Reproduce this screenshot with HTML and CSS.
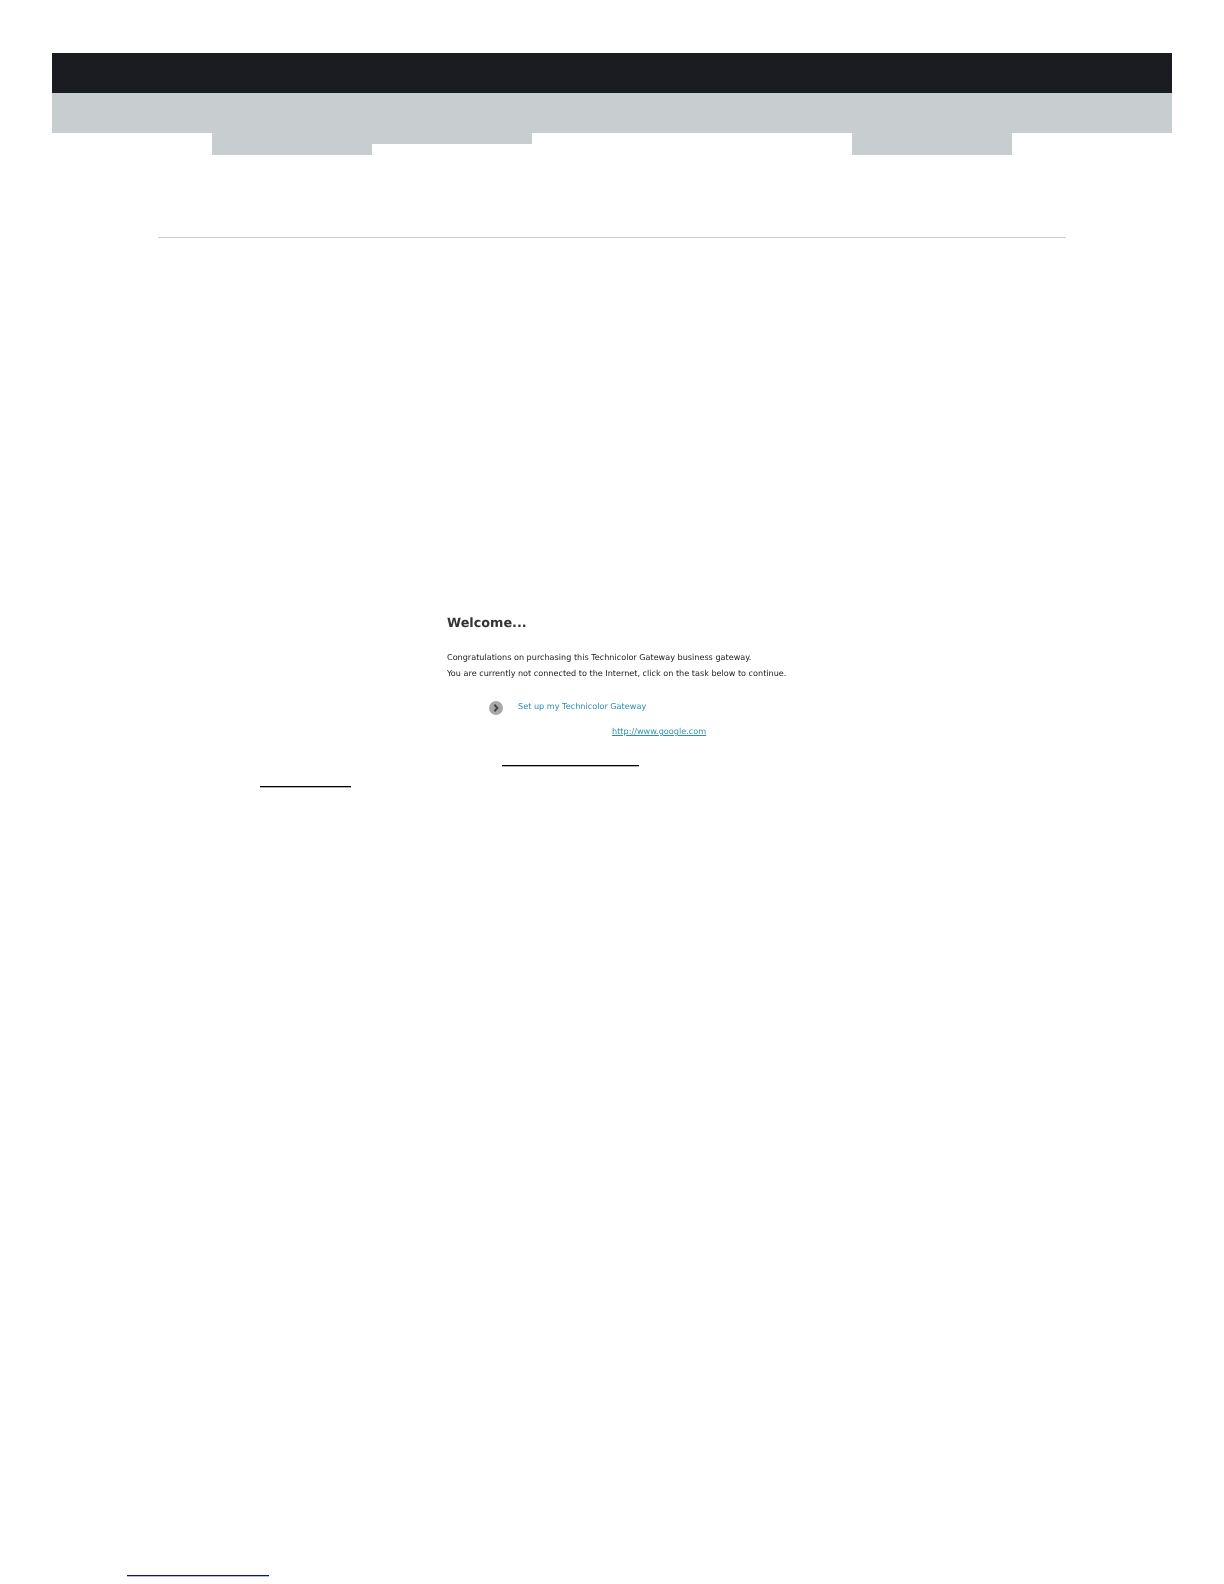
FILE: index.html
```html
<!DOCTYPE html>
<html lang="en">
<head>
<meta charset="utf-8">
<title>Welcome</title>
<link rel="stylesheet" href="styles.css">
</head>
<body>
<header class="bands">
  <div class="band-dark"></div>
  <div class="band-gray"></div>
  <div class="tabs">
    <div class="tab tab-tall"></div>
    <div class="tab tab-short"></div>
    <div class="tab"></div>
    <div class="tab"></div>
    <div class="tab tab-tall"></div>
  </div>
</header>
<hr class="rule">
<section class="shot">
  <h1 class="shot-title">Welcome...</h1>
  <p class="shot-line shot-line-first">Congratulations on purchasing this Technicolor Gateway business gateway.</p>
  <p class="shot-line">You are currently not connected to the Internet, click on the task below to continue.</p>
  <div class="task">
    <svg class="task-icon" viewBox="0 0 14 14" aria-hidden="true">
      <circle cx="7" cy="7" r="7" fill="#a8a8a8"/>
      <path d="M5.4 3.8 8.4 7 5.4 10.2" fill="none" stroke="#444" stroke-width="2"/>
    </svg>
    <a class="task-link" href="#">Set up my Technicolor Gateway</a>
  </div>
  <a class="web-link" href="#">http://www.google.com</a>
</section>
<div class="underline underline-a"></div>
<div class="underline underline-b"></div>
<div class="underline underline-c"></div>
</body>
</html>
```
FILE: styles.css
```css
html, body {
  margin: 0;
  padding: 0;
  background: #fff;
}
body {
  height: 1584px;
  overflow: hidden;
  font-family: "DejaVu Sans", Verdana, sans-serif;
  text-rendering: geometricPrecision;
}
.bands {
  margin: 53px 52px 0;
  width: 1120px;
}
.band-dark {
  height: 40px;
  background: #1a1c22;
}
.band-gray {
  height: 40px;
  background: #c8cecf;
}
.tabs {
  display: grid;
  grid-template-columns: repeat(5, 160px);
  padding-left: 160px;
  height: 22px;
}
.tab-tall {
  height: 22px;
  background: #c8cecf;
}
.tab-short {
  height: 11px;
  background: #c8cecf;
}
.rule {
  width: 908px;
  height: 1px;
  margin: 82px 0 0 158px;
  border: 0;
  background: #cfd1d1;
}
.shot {
  margin: 374px 0 0 447px;
  width: 360px;
  filter: blur(0.35px);
}
.shot-title {
  margin: 0;
  height: 23px;
  font-size: 12.8px;
  line-height: 23px;
  font-weight: 700;
  color: #333;
}
.shot-line {
  margin: 0;
  height: 16px;
  font-size: 8.1px;
  line-height: 16px;
  color: #1c1c1c;
  white-space: nowrap;
}
.shot-line-first {
  margin-top: 14px;
}
.task {
  display: flex;
  align-items: center;
  gap: 15px;
  margin: 17px 0 0 42px;
  height: 16px;
}
.task-icon {
  width: 14px;
  height: 14px;
  flex: none;
  margin-top: 4px;
}
.task-link {
  font-size: 8.15px;
  color: #2b8fb3;
  text-decoration: none;
  white-space: nowrap;
}
.web-link {
  display: block;
  margin: 11px 0 0 165px;
  font-size: 8.15px;
  line-height: 12px;
  color: #2b8fb3;
  white-space: nowrap;
}
.underline {
  height: 1px;
  background: #000;
  box-shadow: 0 1px 0 rgba(0, 0, 0, 0.3);
}
.underline-a {
  width: 137px;
  margin: 28px 0 0 502px;
}
.underline-b {
  width: 91px;
  margin: 20px 0 0 260px;
}
.underline-c {
  width: 142px;
  margin: 788px 0 0 127px;
  background: #10108a;
  box-shadow: 0 1px 0 rgba(16, 16, 138, 0.3);
}
```
